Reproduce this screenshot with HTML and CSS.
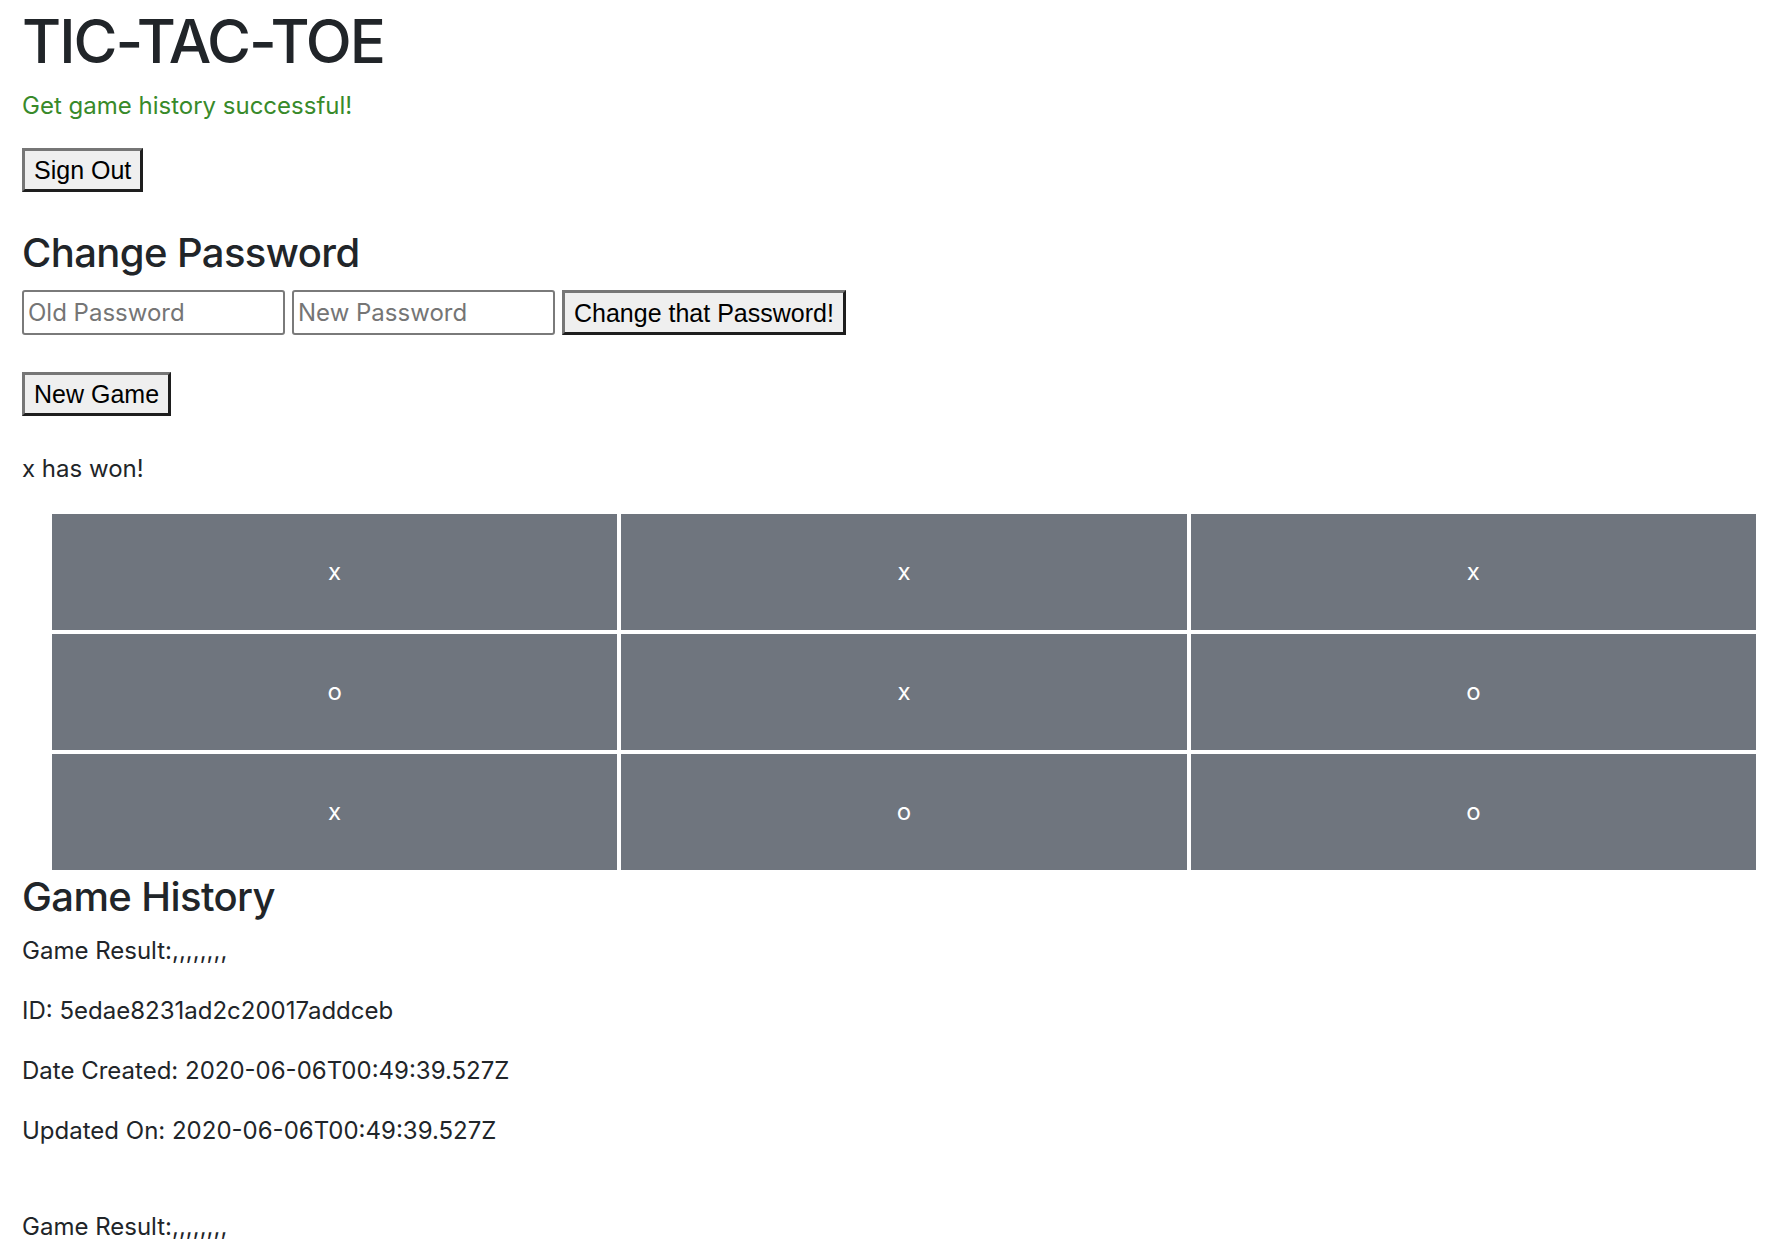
FILE: index.html
```html
<!DOCTYPE html>
<html lang="en">
<head>
<meta charset="utf-8">
<title>Tic-Tac-Toe</title>
<link rel="stylesheet" href="styles.css">
</head>
<body>
<main class="page">
  <h1 class="title">TIC-TAC-TOE</h1>
  <p class="message">Get game history successful!</p>

  <button class="btn btn-signout" type="button">Sign Out</button>

  <h3 class="section-title section-title--password">Change Password</h3>
  <form class="password-form">
    <input class="field" type="password" placeholder="Old Password">
    <input class="field" type="password" placeholder="New Password">
    <button class="btn" type="button">Change that Password!</button>
  </form>

  <button class="btn btn-newgame" type="button">New Game</button>

  <p class="status">x has won!</p>

  <div class="board">
    <div class="cell">x</div>
    <div class="cell">x</div>
    <div class="cell">x</div>
    <div class="cell">o</div>
    <div class="cell">x</div>
    <div class="cell">o</div>
    <div class="cell">x</div>
    <div class="cell">o</div>
    <div class="cell">o</div>
  </div>

  <h3 class="section-title section-title--history">Game History</h3>
  <div class="history">
    <div class="game">
      <p class="line">Game Result:,,,,,,,,</p>
      <p class="line">ID: 5edae8231ad2c20017addceb</p>
      <p class="line">Date Created: 2020-06-06T00:49:39.527Z</p>
      <p class="line">Updated On: 2020-06-06T00:49:39.527Z</p>
    </div>
    <div class="game">
      <p class="line">Game Result:,,,,,,,,</p>
    </div>
  </div>
</main>
</body>
</html>
```
FILE: styles.css
```css
html, body {
  margin: 0;
  padding: 0;
  background: #ffffff;
}

body {
  font-family: "Inter", "Liberation Sans", sans-serif;
  font-size: 24px;
  line-height: 36px;
  color: #212529;
}

.page {
  padding: 0 22px;
}

.title {
  font-size: 60px;
  font-weight: 500;
  line-height: 72px;
  letter-spacing: -2px;
  margin: 5px 0 11px;
}

.message {
  color: #388a2a;
  margin: 0;
}

.btn {
  display: block;
  font-family: "Liberation Sans", Arial, sans-serif;
  font-size: 25px;
  line-height: 38px;
  padding: 0 9px;
  color: #000;
  background: #efefef;
  border-style: solid;
  border-width: 3px;
  border-color: #767676 #1e1e1e #1e1e1e #767676;
  border-radius: 0;
  cursor: pointer;
}

.btn-signout {
  margin-top: 24px;
}

.section-title {
  font-size: 40px;
  font-weight: 500;
  line-height: 48px;
  letter-spacing: -0.6px;
  margin: 0;
}

.section-title--password {
  margin-top: 37px;
}

.password-form {
  display: flex;
  gap: 7px;
  margin-top: 13px;
  align-items: stretch;
}

.field {
  width: 263px;
  height: 45px;
  box-sizing: border-box;
  border: 2px solid #7a7a7a;
  border-radius: 3px;
  padding: 0 4px;
  font-family: "Inter", "Liberation Sans", sans-serif;
  font-size: 24px;
  color: #212529;
}

.field::placeholder {
  color: #757575;
}

.btn-newgame {
  margin-top: 37px;
}

.status {
  margin: 35px 0 0;
}

.board {
  display: grid;
  grid-template-columns: repeat(3, 1fr);
  grid-auto-rows: 116px;
  gap: 4px;
  margin: 27px 10px 0 30px;
}

.cell {
  display: flex;
  align-items: center;
  justify-content: center;
  background: #6f757e;
  color: #ffffff;
  font-size: 24px;
}

.section-title--history {
  margin-top: 3px;
}

.history {
  margin-top: 12px;
}

.line {
  margin: 0 0 24px;
}

.game + .game {
  margin-top: 60px;
}
```
